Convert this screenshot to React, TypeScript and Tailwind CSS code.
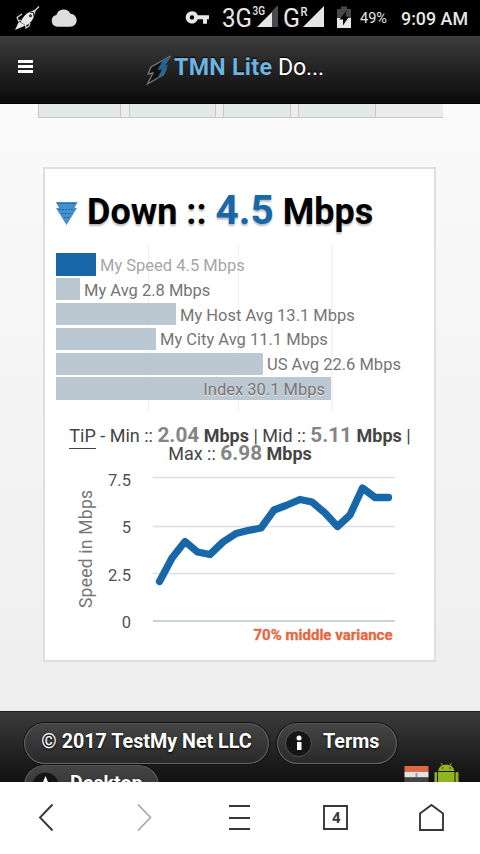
import React from "react";

const bars = [
  { label: "My Speed 4.5 Mbps", width: 40, color: "bg-[#1767a9]", text: "text-[#a6a6a6]" },
  { label: "My Avg 2.8 Mbps", width: 24, color: "bg-[#bcc8d1]", text: "text-[#757575]" },
  { label: "My Host Avg 13.1 Mbps", width: 120, color: "bg-[#bcc8d1]", text: "text-[#757575]" },
  { label: "My City Avg 11.1 Mbps", width: 100, color: "bg-[#bcc8d1]", text: "text-[#757575]" },
  { label: "US Avg 22.6 Mbps", width: 207, color: "bg-[#bcc8d1]", text: "text-[#757575]" },
];

function StatusBar() {
  return (
    <div className="h-9 bg-black">
      <svg width="480" height="36" viewBox="0 0 480 36" fontFamily="Roboto, sans-serif" fill="#e6e6e6">
        {/* rocket */}
        <path d="M36 9.500L30.500 11.500Q24 14 20.500 22L26 25.500Q33 22 34.500 14.500Z" />
        <path d="M34 11.500L39 6.500" stroke="#d8d8d8" strokeWidth="1.300" />
        <path d="M22 14L17 17.500L18.500 21L21 20M30 23L29 26L26 28L25.500 25" fill="none" stroke="#d8d8d8" strokeWidth="1.200" />
        <path d="M19 21.500L15 30L25.500 25.500Z" />
        <path d="M29.500 12L33.500 12.500L34 16.500" fill="none" stroke="#111" strokeWidth="1" />
        <circle cx="30.500" cy="15.800" r="1.500" fill="#333" />
        <path d="M57 26.700a6 6 0 0 1-.6-11.800 7.600 7.600 0 0 1 14-1.200 6.500 6.500 0 0 1-.4 13Z" fill="#dedede" />
        {/* key */}
        <path fillRule="evenodd" d="M192 11.200a6.200 6.200 0 0 1 5.800 4H209v4h-2v4.500h-4v-4.500h-5.200a6.200 6.200 0 1 1-5.800-8Zm0 4a2.200 2.200 0 1 0 0 4.400 2.200 2.200 0 0 0 0-4.400Z" />
        <text x="222" y="26.500" fontSize="26" textLength="30" lengthAdjust="spacingAndGlyphs">3G</text>
        <path d="M257 27L273 11V27Z" />
        <path d="M272 11L278 5V27H272Z" fill="#4a4a4a" />
        <text x="252.500" y="15" fontSize="12" fontWeight="500" textLength="12.500" lengthAdjust="spacingAndGlyphs">3G</text>
        <text x="283" y="26.500" fontSize="26" textLength="17" lengthAdjust="spacingAndGlyphs">G</text>
        <path d="M303 27L324 6V27Z" />
        <text x="300.500" y="15.500" fontSize="12" fontWeight="500" textLength="7" lengthAdjust="spacingAndGlyphs">R</text>
        <path d="M337 9h4V6.500h6V9h4v19h-14Z" fill="#484848" />
        <path d="M337 18h14v10h-14Z" />
        <path d="M346.500 10.500L339.500 19.500H343V25.500L349 16.500H345.500Z" fill="#080808" />
        <text x="360" y="23" fontSize="14.300" textLength="27" lengthAdjust="spacingAndGlyphs">49%</text>
        <text x="401" y="25" fontSize="18.300" textLength="67" fontWeight="500" lengthAdjust="spacingAndGlyphs">9:09 AM</text>
      </svg>
    </div>
  );
}

function SiteHeader() {
  return (
    <header className="flex h-[68px] items-start border-b border-black bg-linear-to-b from-[#3d3d3d] to-[#0b0b0b]">
      <div className="ml-[18px] mt-6 flex w-[15px] flex-col gap-[2.200px]">
        <span className="h-[3px] bg-white" />
        <span className="h-[3px] bg-white" />
        <span className="h-[3px] bg-white" />
      </div>
      <svg className="ml-[113px] mt-[18px] shrink-0" width="28" height="32" viewBox="146 54 28 32">
        <path d="M170.500 56L151 67L148 74L153 73L147.500 84L163 75L166 69L162 68.500Z" fill="#111" stroke="#777" strokeWidth="1.300" />
        <path d="M170.500 56.500L163 60L157.500 70L162 69.500L157 79L163 75L168 65L164 65.500Z" fill="#216496" />
      </svg>
      <h1 className="mt-[15px] whitespace-nowrap text-[23.200px] leading-[32px] text-white [text-shadow:0_-1px_1px_#000]">
        <b className="tracking-[0.300px] text-[#6eb4e1]">TMN Lite</b>{" "}
        <span className="tracking-[-0.200px]">Do...</span>
      </h1>
    </header>
  );
}

function SpeedBars() {
  return (
    <div className="relative mt-[9px] h-[168px] pt-[9px]">
      <div className="absolute left-[92px] top-0 h-full w-px bg-[#f1f1f1]" />
      <div className="absolute left-[182px] top-0 h-full w-px bg-[#f1f1f1]" />
      <div className="absolute left-[275px] top-0 h-full w-[2px] bg-[#f5f5f5]" />
      <div className="relative flex flex-col gap-[2.400px] text-[16.500px]">
        {bars.map((bar) => (
          <div key={bar.label} className="flex h-[22.500px] items-center gap-[4px]">
            <div className={`h-full shrink-0 ${bar.color}`} style={{ width: bar.width }} />
            <span className={`relative top-[1.500px] whitespace-nowrap leading-5 ${bar.text}`}>{bar.label}</span>
          </div>
        ))}
        <div className="flex h-[22.500px] w-[275px] items-center justify-end bg-[#bcc8d1]">
          <span className="relative top-px mr-[6px] whitespace-nowrap leading-5 text-[#757575] [text-shadow:0_1px_1px_#eee]">Index 30.1 Mbps</span>
        </div>
      </div>
    </div>
  );
}

function SpeedChart() {
  return (
    <svg className="-ml-[11px] block" width="390" height="190" viewBox="45 466 390 190" fontFamily="Roboto, sans-serif" fontSize="16.500" fill="#515151">
      <path d="M153 477.500H395M153 526.500H395M153 573.500H395" stroke="#dedede" strokeWidth="1.400" />
      <path d="M153 621H395" stroke="#b5c5c6" strokeWidth="1.600" />
      <text x="131" y="486" textAnchor="end">7.5</text>
      <text x="131" y="533" textAnchor="end">5</text>
      <text x="131" y="581" textAnchor="end">2.5</text>
      <text x="131" y="628" textAnchor="end">0</text>
      <text transform="translate(91.500 608) rotate(-90)" textLength="118" fontSize="17.500" fill="#777">Speed in Mbps</text>
      <polyline points="159.500,581.500 172,558 185,541.500 197.500,552 210,554.500 223,542 236,533.500 248,530.500 261,528 274,510 286,505.500 300,499.500 312,502 325,513 337.500,526.500 350,515 362.500,488 375,497.500 388.500,497.500" fill="none" stroke="#1767a9" strokeWidth="7.300" strokeLinecap="round" strokeLinejoin="round" />
      <text x="253.500" y="640" fontSize="14.500" fontWeight="700" textLength="139" lengthAdjust="spacingAndGlyphs" fill="#e46842" stroke="#e46842" strokeWidth=".3">70% middle variance</text>
    </svg>
  );
}

function ResultCard() {
  return (
    <section className="ml-[43px] h-[495px] w-[393px] border-2 border-[#dfdfdf] bg-white pl-[11px]">
      <div className="flex h-[66px] items-end">
        <svg className="mb-[9px]" width="22" height="24" viewBox="0 0 22 24">
          <path d="M0 0H21.500L18.500 6H21L10.500 23L0 6H3Z" fill="#4691cb" />
          <path d="M1 1.500H20M3 7.500H18M5.500 11.500H15.500M8 15.500H13.500" stroke="#1767a9" strokeWidth="1.200" strokeDasharray="2 1" />
        </svg>
        <h2 className="-mb-px ml-[9px] whitespace-nowrap text-[36px] font-bold leading-[48px] text-black [text-shadow:0_2px_2px_#bbb]">
          Down :: <span className="text-[40.500px] text-[#1767a9]">4.5</span> Mbps
        </h2>
      </div>
      <SpeedBars />
      <p className="-ml-[11px] mt-[14px] h-[40px] w-[390px] whitespace-nowrap text-center text-[18px] leading-[18px] text-[#454545]">
        <span className="inline-block h-[22px] border-b-[1.500px] border-[#444]">TiP</span> - Min ::{" "}
        <b className="text-[20.800px] text-[#858585]">2.04</b> <b>Mbps</b> | Mid ::{" "}
        <b className="text-[20.800px] text-[#858585]">5.11</b> <b>Mbps</b> |
        <span className="-mt-[5px] block">
          Max :: <b className="text-[20.800px] text-[#858585]">6.98</b> <b>Mbps</b>
        </span>
      </p>
      <SpeedChart />
    </section>
  );
}

const pill =
  "flex items-center rounded-full border border-[#666] border-t-[#555] bg-linear-to-b from-[#454545] to-[#292929] text-[19.700px] font-bold text-white whitespace-nowrap shadow-[0_0_0_1px_#111] [text-shadow:0_1px_2px_#000]";

function SiteFooter() {
  return (
    <footer className="flex h-[71px] justify-between overflow-hidden border-t border-[#222] bg-linear-to-b from-[#3b3b3b] to-[#111] pl-6 pt-[11px]">
      <div>
        <div className="flex gap-[8px]">
          <div className={`${pill} h-[41px] w-[245px] justify-center`}>
            <span className="-mt-1">© 2017 TestMy Net LLC</span>
          </div>
          <div className={`${pill} h-[41px] w-[120px] pl-[7px]`}>
            <svg width="27" height="27" viewBox="0 0 27 27">
              <circle cx="13.500" cy="13.500" r="13" fill="#151515" stroke="#555" />
              <circle cx="14" cy="8" r="2.500" fill="#fff" />
              <path d="M12 12h4.500v8H12Z" fill="#fff" />
            </svg>
            <span className="-mt-1 ml-[11px]">Terms</span>
          </div>
        </div>
        <div className={`${pill} mt-[1px] h-[41px] w-[135px] pl-[7px]`}>
          <svg width="27" height="27" viewBox="0 0 27 27">
            <circle cx="13.500" cy="13.500" r="13" fill="#151515" />
            <path d="M13.500 4L16 10L22 10.500L17.500 14L19 20L13.500 17L8 20L9.500 14L5 10.500L11 10Z" fill="#fff" />
          </svg>
          <span className="-mt-1 ml-[11px]">Desktop</span>
        </div>
      </div>
      <div className="mr-[21px] mt-[39px] flex gap-[5px]">
        <svg className="mt-1" width="25" height="18" viewBox="0 0 25 18">
          <path d="M.5 0h24v6H.5Z" fill="#df6847" />
          <path d="M.5 6h24v5.500H.5Z" fill="#e5e3e0" />
          <path d="M.5 11.500h24V18H.5Z" fill="#444" />
          <path d="M11.500 7h2v4h-2Z" fill="#999" />
        </svg>
        <svg width="25" height="24" viewBox="0 0 25 24" fill="#91b51f">
          <path d="M4 9a8.500 8.500 0 0 1 16.500 0ZM4 10h16.500v12H4ZM.5 10.500Q1.700 9.500 3 10.500V20H.5ZM21.500 10.500Q22.700 9.500 24.500 10.500V20h-3Z" />
          <path d="M7 1L8.500 3.500M17.500 1L16 3.500" stroke="#91b51f" />
          <circle cx="8.500" cy="6" r=".8" fill="#333" />
          <circle cx="16" cy="6" r=".8" fill="#333" />
        </svg>
      </div>
    </footer>
  );
}

function BrowserNav() {
  return (
    <nav className="h-[72px] bg-white">
      <svg width="480" height="72" viewBox="0 782 480 72" fill="none" stroke="#373737" strokeWidth="1.900">
        <path d="M52.500 804.500L40 817.500L52.500 830.500" />
        <path d="M138 804.500L150.500 817.500L138 830.500" stroke="#a5a5a5" strokeWidth="1.600" />
        <path d="M229 806H250M229 818H250M229 829H250" />
        <path d="M324 806H347V829H324Z" />
        <text x="332" y="823" fill="#373737" stroke="none" fontFamily="Roboto, sans-serif" fontWeight="700" fontSize="15">4</text>
        <path d="M420 830V813.500L431.500 805L443 813.500V830Z" />
      </svg>
    </nav>
  );
}

export default function App() {
  return (
    <div className="h-[854px] w-[480px] overflow-hidden font-['Roboto',sans-serif]">
      <StatusBar />
      <SiteHeader />
      <main className="h-[607px] bg-linear-to-b from-[#fafafa] to-[#eee]">
        <div className="mb-[49px] ml-[38px] flex h-[14px] w-[405px] border-b border-l border-[#c4c8ca] bg-[#e5e8e8]">
          <span className="w-[82px] border-r border-[#c4c8ca]" />
          <span className="w-[9px] border-r border-[#c4c8ca] bg-[#ededed]" />
          <span className="w-[86px] border-r border-[#c4c8ca]" />
          <span className="w-[8px] border-r border-[#c4c8ca] bg-[#ededed]" />
          <span className="w-[67px] border-r border-[#c4c8ca]" />
          <span className="w-[8px] border-r border-[#c4c8ca] bg-[#ededed]" />
          <span className="w-[77px] border-r border-[#c4c8ca]" />
          <span className="flex-1 bg-[#ebebeb]" />
        </div>
        <ResultCard />
      </main>
      <SiteFooter />
      <BrowserNav />
    </div>
  );
}
